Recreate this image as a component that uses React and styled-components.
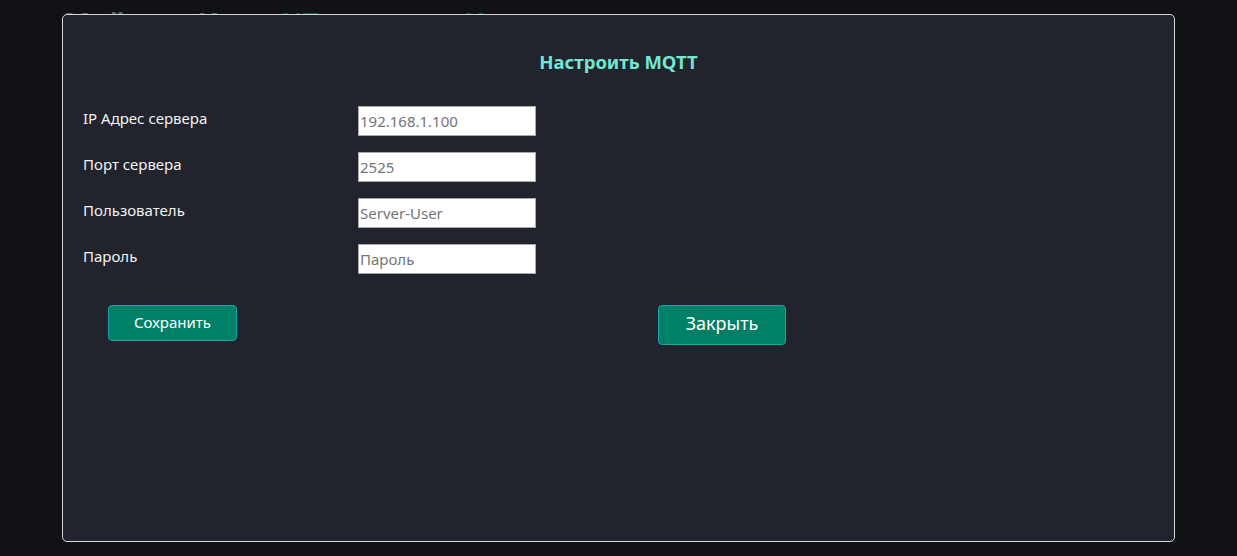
import React from "react";
import styled, { createGlobalStyle } from "styled-components";

const GlobalStyle = createGlobalStyle`
  html, body {
    margin: 0;
    padding: 0;
    background: #111216;
    font-family: "Noto Sans", "Open Sans", sans-serif;
  }
`;

const fields = [
  { label: "IP Адрес сервера", placeholder: "192.168.1.100" },
  { label: "Порт сервера", placeholder: "2525" },
  { label: "Пользователь", placeholder: "Server-User" },
  { label: "Пароль", placeholder: "Пароль" },
];

const App = () => {
  return (
    <Page>
      <GlobalStyle />
      {/* шапка страницы под модалкой */}
      <Header>
        <HeadText>Мой дом</HeadText>
        <HeadText>Ход</HeadText>
        <HeadText green>НТ-сенсор</HeadText>
        <HeadText green>Норма</HeadText>
      </Header>

      <Overlay>
        <Modal>
          <Title>Настроить MQTT</Title>
          <Form>
            {fields.map((f) => (
              <Row key={f.label}>
                <Label>{f.label}</Label>
                <Input type="text" placeholder={f.placeholder} />
              </Row>
            ))}
          </Form>
          <ButtonRow>
            <Button>Сохранить</Button>
            <Button big>Закрыть</Button>
          </ButtonRow>
        </Modal>
      </Overlay>
    </Page>
  );
};

const Page = styled.div`
  width: 100%;
  height: 100vh;
  overflow: hidden;
`;

const Header = styled.div`
  display: grid;
  grid-template-columns: 135px 82px 183px auto;
  padding: 3px 0 0 64px;
`;

const HeadText = styled.span`
  font-size: 28px;
  font-weight: 700;
  line-height: 40px;
  color: ${(props) => (props.green ? "#0d5a46" : "#5f6268")};
`;

const Overlay = styled.div`
  position: fixed;
  inset: 0;
  padding: 14px 62px 14px 62px;
`;

const Modal = styled.div`
  width: 1113px;
  height: 528px;
  box-sizing: border-box;
  background: #21242c;
  border: 1px solid #d6d6d6;
  border-radius: 5px;
  padding: 34px 20px 0 20px;
`;

const Title = styled.h2`
  margin: 0;
  text-align: center;
  font-size: 18.5px;
  font-weight: 700;
  line-height: 26px;
  color: #73e6d3;
`;

const Form = styled.div`
  display: flex;
  flex-direction: column;
  gap: 16px;
  margin-top: 31px;
`;

const Row = styled.div`
  display: grid;
  grid-template-columns: 275px 178px;
  align-items: start;
`;

const Label = styled.label`
  font-size: 15px;
  line-height: 20px;
  color: #f2f2f2;
  padding-top: 2px;
`;

const Input = styled.input`
  width: 178px;
  height: 30px;
  box-sizing: border-box;
  margin: 0;
  padding: 0 1px;
  border: 1px solid #a9a9a9;
  background: #ffffff;
  font-family: "Noto Sans", "Open Sans", sans-serif;
  font-size: 15px;
  color: #333;
  outline: none;
  &::placeholder {
    color: #757575;
  }
`;

const ButtonRow = styled.div`
  display: grid;
  grid-template-columns: 550px auto;
  align-items: start;
  padding-left: 25px;
  margin-top: 31px;
`;

const Button = styled.button`
  width: ${(props) => (props.big ? "128px" : "129px")};
  height: ${(props) => (props.big ? "40px" : "36px")};
  box-sizing: border-box;
  background: #008066;
  border: 1px solid #1ba3a8;
  border-radius: 4px;
  color: #ffffff;
  font-family: "Noto Sans", "Open Sans", sans-serif;
  font-size: ${(props) => (props.big ? "18px" : "15px")};
  line-height: 1;
  cursor: pointer;
  padding: 0 0 ${(props) => (props.big ? "4px" : "1px")};
  &:hover {
    background: #009070;
  }
`;

export default App;
